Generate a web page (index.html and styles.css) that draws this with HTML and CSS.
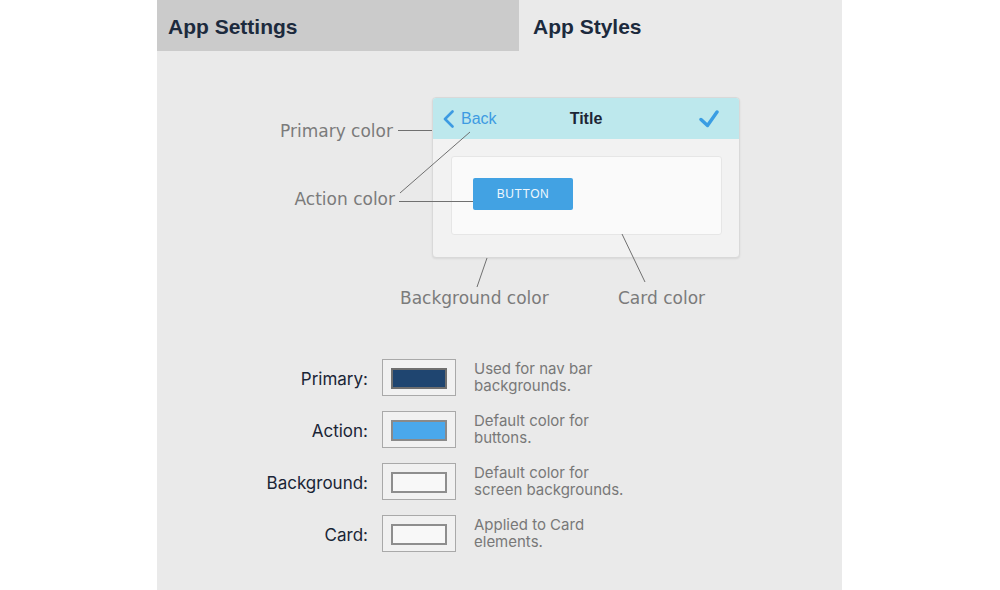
FILE: index.html
```html
<!DOCTYPE html>
<html>
<head>
  <title>App Styles</title>
  <link rel="stylesheet" href="styles.css">
</head>
<body>
  <div class="panel">
    <div class="tabs">
      <div class="tab tab-inactive">App Settings</div>
      <div class="tab tab-active">App Styles</div>
    </div>

    <div class="diagram">
      <div class="mockup">
        <div class="navbar">
          <div class="nav-back">
            <svg width="11" height="18" viewBox="0 0 11 18">
              <path d="M9.5 1.5 L2 9 L9.5 16.5" fill="none" stroke="#3d9be2" stroke-width="2.6" stroke-linecap="round" stroke-linejoin="round"/>
            </svg>
            <span>Back</span>
          </div>
          <div class="nav-title">Title</div>
          <div class="nav-done">
            <svg width="20" height="18" viewBox="0 0 20 18">
              <path d="M2 9.5 L8.5 15.5 L18 2" fill="none" stroke="#3a9de3" stroke-width="3.4" stroke-linecap="round" stroke-linejoin="round"/>
            </svg>
          </div>
        </div>
        <div class="screen">
          <div class="card">
            <div class="button">BUTTON</div>
          </div>
        </div>
      </div>

      <svg class="leaders" width="685" height="309" viewBox="0 0 685 309">
        <line x1="241" y1="79.5" x2="275" y2="79.5"/>
        <line x1="242" y1="150.5" x2="316" y2="150.5"/>
        <line x1="243" y1="142" x2="313" y2="81"/>
        <line x1="330" y1="207" x2="320" y2="236"/>
        <line x1="465" y1="183" x2="488" y2="231"/>
      </svg>

      <div class="note note-primary">Primary color</div>
      <div class="note note-action">Action color</div>
      <div class="note note-background">Background color</div>
      <div class="note note-card">Card color</div>
    </div>

    <div class="styles-list">
      <div class="style-row">
        <div class="style-label">Primary:</div>
        <div class="well"><div class="swatch swatch-primary"></div></div>
        <div class="style-desc">Used for nav bar<br>backgrounds.</div>
      </div>
      <div class="style-row">
        <div class="style-label">Action:</div>
        <div class="well"><div class="swatch swatch-action"></div></div>
        <div class="style-desc">Default color for<br>buttons.</div>
      </div>
      <div class="style-row">
        <div class="style-label">Background:</div>
        <div class="well"><div class="swatch swatch-light"></div></div>
        <div class="style-desc">Default color for<br>screen backgrounds.</div>
      </div>
      <div class="style-row">
        <div class="style-label">Card:</div>
        <div class="well"><div class="swatch swatch-light"></div></div>
        <div class="style-desc">Applied to Card<br>elements.</div>
      </div>
    </div>
  </div>
</body>
</html>
```

FILE: styles.css
```css
body {
  margin: 0;
  background-color: #fff;
  font-family: "Liberation Sans", Arial, sans-serif;
}
.panel {
  margin-left: 157px;
  width: 685px;
  height: 590px;
  background-color: #eaeaea;
}
.tabs {
  display: flex;
  height: 51px;
}
.tab {
  display: flex;
  align-items: center;
  font-size: 21px;
  font-weight: bold;
  color: #1c2a3d;
  padding-top: 2px;
  box-sizing: border-box;
}
.tab-inactive {
  width: 362px;
  padding-left: 11px;
  background-color: #cbcbcb;
}
.tab-active {
  padding-left: 14px;
}
.diagram {
  position: relative;
  height: 309px;
}
.mockup {
  position: absolute;
  left: 275px;
  top: 46px;
  width: 308px;
  height: 161px;
  box-sizing: border-box;
  border: 1px solid #d9d9d9;
  border-radius: 4px;
  background-color: #f2f2f2;
  box-shadow: 0 1px 2px rgba(0, 0, 0, 0.08);
  overflow: hidden;
}
.navbar {
  display: grid;
  grid-template-columns: 1fr auto 1fr;
  align-items: center;
  height: 41px;
  background-color: #bde8ed;
}
.nav-back {
  display: flex;
  align-items: center;
  gap: 7px;
  padding-left: 10px;
  font-size: 16px;
  color: #3d9be2;
}
.nav-back svg {
  display: block;
}
.nav-title {
  font-size: 16px;
  font-weight: bold;
  color: #1d2636;
}
.nav-done {
  display: flex;
  justify-content: flex-end;
  padding-right: 20px;
}
.screen {
  padding: 17px 17px 0 18px;
}
.card {
  height: 79px;
  box-sizing: border-box;
  padding: 21px 0 0 21px;
  background-color: #fafafa;
  border: 1px solid #e6e6e6;
  border-radius: 3px;
}
.button {
  width: 100px;
  height: 32px;
  line-height: 32px;
  text-align: center;
  background-color: #42a2e3;
  border-radius: 2px;
  color: #eef7fd;
  font-size: 12px;
  letter-spacing: 0.6px;
}
.leaders {
  position: absolute;
  left: 0;
  top: 0;
}
.leaders line {
  stroke: #707070;
  stroke-width: 1;
}
.note {
  position: absolute;
  font-family: "DejaVu Sans", sans-serif;
  font-size: 17px;
  line-height: 20px;
  color: #7b7b7b;
  white-space: nowrap;
}
.note-primary {
  left: 123px;
  top: 70px;
}
.note-action {
  right: 447px;
  top: 138px;
}
.note-background {
  left: 243px;
  top: 237px;
}
.note-card {
  left: 461px;
  top: 237px;
}
.styles-list {
  display: flex;
  flex-direction: column;
  gap: 15px;
  margin-top: -1px;
}
.style-row {
  display: grid;
  grid-template-columns: 211px 74px auto;
  column-gap: 14px;
  align-items: center;
  height: 37px;
}
.style-label {
  text-align: right;
  font-family: Inter, sans-serif;
  font-size: 17px;
  color: #1a2536;
  padding-top: 2px;
}
.well {
  height: 37px;
  box-sizing: border-box;
  border: 1px solid #a9a9a9;
  background-color: #f1f1f1;
  padding: 8px 8px 6px 8px;
}
.swatch {
  height: 21px;
  box-sizing: border-box;
  border: 2px solid #7e7e7e;
}
.swatch-primary {
  background-color: #1f4570;
  border-color: #6f6f6f;
}
.swatch-action {
  background-color: #4aa8ec;
  border-color: #8a8a8a;
}
.swatch-light {
  background-color: #f8f8f8;
  border-color: #8e8e8e;
}
.style-desc {
  margin: 0 0 2px 4px;
  font-family: Inter, sans-serif;
  font-size: 15px;
  line-height: 17px;
  color: #787878;
}
```
